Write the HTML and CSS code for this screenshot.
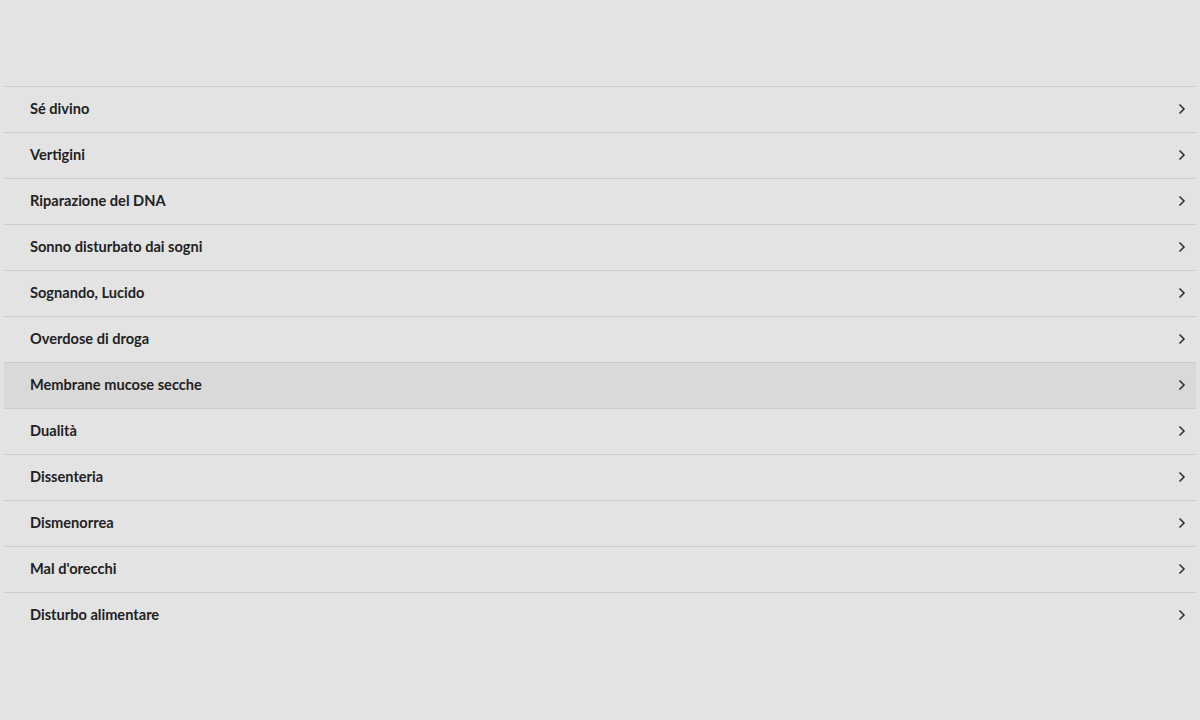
FILE: index.html
```html
<!DOCTYPE html>
<html lang="it">
<head>
    <meta charset="UTF-8">
    <meta name="viewport" content="width=device-width, initial-scale=1.0">
    <title>Disturbi</title>
    <link rel="stylesheet" href="styles.css">
</head>
<body>
    <ul class="topic-list">
        <li class="topic"><span>Sé divino</span><svg class="chevron" viewBox="0 0 8 12"><path d="M1.5 1.5 L6 6 L1.5 10.5"/></svg></li>
        <li class="topic"><span>Vertigini</span><svg class="chevron" viewBox="0 0 8 12"><path d="M1.5 1.5 L6 6 L1.5 10.5"/></svg></li>
        <li class="topic"><span>Riparazione del DNA</span><svg class="chevron" viewBox="0 0 8 12"><path d="M1.5 1.5 L6 6 L1.5 10.5"/></svg></li>
        <li class="topic"><span>Sonno disturbato dai sogni</span><svg class="chevron" viewBox="0 0 8 12"><path d="M1.5 1.5 L6 6 L1.5 10.5"/></svg></li>
        <li class="topic"><span>Sognando, Lucido</span><svg class="chevron" viewBox="0 0 8 12"><path d="M1.5 1.5 L6 6 L1.5 10.5"/></svg></li>
        <li class="topic"><span>Overdose di droga</span><svg class="chevron" viewBox="0 0 8 12"><path d="M1.5 1.5 L6 6 L1.5 10.5"/></svg></li>
        <li class="topic active"><span>Membrane mucose secche</span><svg class="chevron" viewBox="0 0 8 12"><path d="M1.5 1.5 L6 6 L1.5 10.5"/></svg></li>
        <li class="topic"><span>Dualità</span><svg class="chevron" viewBox="0 0 8 12"><path d="M1.5 1.5 L6 6 L1.5 10.5"/></svg></li>
        <li class="topic"><span>Dissenteria</span><svg class="chevron" viewBox="0 0 8 12"><path d="M1.5 1.5 L6 6 L1.5 10.5"/></svg></li>
        <li class="topic"><span>Dismenorrea</span><svg class="chevron" viewBox="0 0 8 12"><path d="M1.5 1.5 L6 6 L1.5 10.5"/></svg></li>
        <li class="topic"><span>Mal d'orecchi</span><svg class="chevron" viewBox="0 0 8 12"><path d="M1.5 1.5 L6 6 L1.5 10.5"/></svg></li>
        <li class="topic"><span>Disturbo alimentare</span><svg class="chevron" viewBox="0 0 8 12"><path d="M1.5 1.5 L6 6 L1.5 10.5"/></svg></li>
    </ul>
</body>
</html>
```

FILE: styles.css
```css
body {
    font-family: 'Lato', 'Liberation Sans', sans-serif;
    background-color: #e3e3e3;
    color: #222;
    margin: 0;
    padding: 86px 4px 0;
}
.topic-list {
    list-style: none;
    margin: 0;
    padding: 0;
}
.topic {
    display: flex;
    align-items: center;
    justify-content: space-between;
    box-sizing: border-box;
    height: 46px;
    padding: 0 10px 3px 26px;
    border-top: 1px solid #cbcbcb;
    font-size: 14.6px;
    font-weight: bold;
}
.topic.active {
    background-color: #d9d9d9;
}
.chevron {
    width: 8px;
    height: 12px;
    margin-top: 1px;
    fill: none;
    stroke: #333;
    stroke-width: 1.6;
}
```
